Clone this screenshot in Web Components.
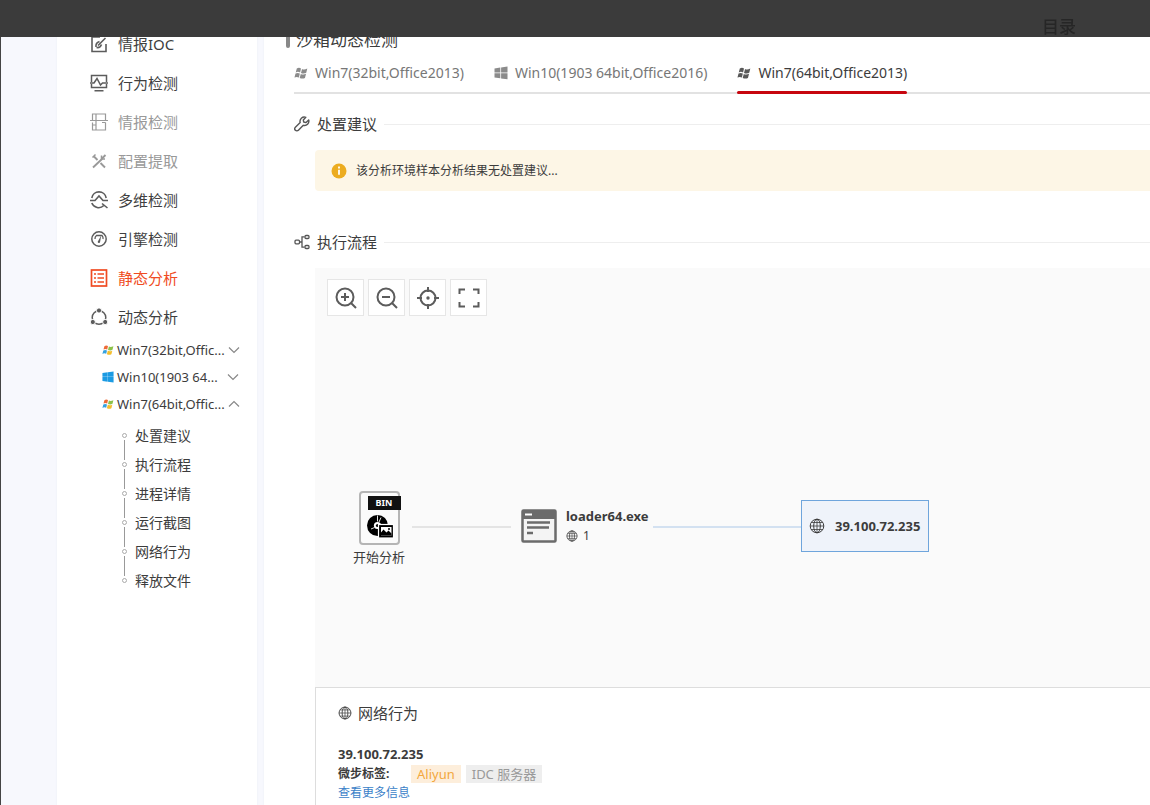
<!DOCTYPE html>
<html lang="zh-CN">
<head>
<meta charset="utf-8">
<meta name="viewport" content="width=device-width, initial-scale=1">
<title>沙箱动态检测</title>
<style>
html, body { margin: 0; height: 100%; }
body {
  color: #3c3c3c;
  font: 13px/20px "Noto Sans", "Noto Sans CJK SC", sans-serif;
}
</style>
</head>
<body>
<report-page>
  <top-bar slot="header">目录</top-bar>

  <side-nav slot="nav">
    <nav-item icon="edit">情报IOC</nav-item>
    <nav-item icon="monitor">行为检测</nav-item>
    <nav-item icon="scan" muted>情报检测</nav-item>
    <nav-item icon="tools" muted>配置提取</nav-item>
    <nav-item icon="multi">多维检测</nav-item>
    <nav-item icon="gauge">引擎检测</nav-item>
    <nav-item icon="list" active>静态分析</nav-item>
    <nav-item icon="ring">动态分析</nav-item>
    <env-item icon="win7c">Win7(32bit,Offic...</env-item>
    <env-item icon="win10c">Win10(1903 64...</env-item>
    <env-item icon="win7c" open>Win7(64bit,Offic...</env-item>
    <step-list>
      <step-item>处置建议</step-item>
      <step-item>执行流程</step-item>
      <step-item>进程详情</step-item>
      <step-item>运行截图</step-item>
      <step-item>网络行为</step-item>
      <step-item>释放文件</step-item>
    </step-list>
  </side-nav>

  <page-heading>沙箱动态检测</page-heading>
  <tab-bar>
    <env-tab icon="win7">Win7(32bit,Office2013)</env-tab>
    <env-tab icon="win10">Win10(1903 64bit,Office2016)</env-tab>
    <env-tab icon="win7" active>Win7(64bit,Office2013)</env-tab>
  </tab-bar>

  <report-section icon="wrench" heading="处置建议">
    <notice-banner>该分析环境样本分析结果无处置建议...</notice-banner>
  </report-section>

  <report-section icon="flow" heading="执行流程" grow>
    <flow-canvas></flow-canvas>
    <network-panel></network-panel>
  </report-section>
</report-page>

<script>
const ICONS = {
  edit: [18, `<g fill="none" stroke="currentColor" stroke-width="1.6"><path d="M10 2H2v14.500h14V9"/><path d="M6 12a5 5 0 0 1 3.500-5.500M6.500 12.500a4.500 4.500 0 0 0 5-3M8 10.500L15.500 3"/></g>`],
  monitor: [18, `<g fill="none" stroke="currentColor" stroke-width="1.500"><path d="M1.500 8V1.500h15V8M1.500 10v3.500h15V10M0 9h4l3-4.500L10.500 11l2-2H18M4.500 16.700h9"/></g>`],
  scan: [18, `<g fill="none" stroke="currentColor" stroke-width="1.200"><path d="M2.500 7V1h13v6M2.500 9.500V17h13V9.500M0 7.500h18M6 1v16M2.500 12H6M12 9.500h3.500"/></g>`],
  tools: [18, `<g fill="none" stroke="currentColor" stroke-width="1.900"><path d="M4 4.500L7.500 8M10.500 11L15 15.500M15.500 3L11.500 7M12 7L3 15.500"/><path d="M2.500 5.500l3-3M11.500 3.500v3.500H15" stroke-width="1.500"/></g>`],
  multi: [18, `<g fill="none" stroke="currentColor" stroke-width="1.600"><path d="M1.800 7a7.300 7.300 0 0 1 14.400 0M1.800 12a7.300 7.300 0 0 0 12 2.500"/><path d="M0 9.500h5L9 5l4 4.500h5M12 12.500l5.500 4.500"/></g>`],
  gauge: [18, `<circle cx="9" cy="9" r="7.200" fill="none" stroke="currentColor" stroke-width="1.500"/><path d="M5 9a4 4 0 0 1 1.500-3.500H12A4 4 0 0 1 13 9" fill="none" stroke="currentColor" stroke-width="1.300"/><path d="M11.200 5.500L10 12.500a1.300 1.300 0 0 1-2.300-.8z" fill="currentColor"/>`],
  list: [18, `<rect x="1.500" y="1" width="15" height="16" fill="none" stroke="currentColor" stroke-width="1.700"/><path d="M4 5h2M4 9h2M4 13h2M7.500 5H14M7.500 9H14M7.500 13H14" stroke="currentColor" stroke-width="1.700"/>`],
  ring: [18, `<circle cx="9" cy="9.500" r="6.800" fill="none" stroke="currentColor" stroke-width="1.500"/><g fill="currentColor" stroke="#fff" stroke-width="1"><circle cx="9" cy="2.500" r="2.600"/><circle cx="2.800" cy="14" r="2.600"/><circle cx="15.200" cy="14" r="2.600"/></g>`],
  win7: [12, `<path fill="currentColor" d="M2.400 2.200Q4.200 1 6 2.100L5.200 5.500Q3.200 4.500 1.500 5.600zM6.900 2.500Q8.600 3.500 11.400 2.200L10.500 5.800Q8.300 6.900 6 5.900zM1.300 6.500Q3 5.400 5 6.400L4.200 9.800Q2.300 8.800.400 9.900zM5.800 6.800Q7.900 7.800 10.300 6.700L9.400 10.200Q7.300 11.300 4.900 10.200z"/>`],
  win10: [14, `<path fill="currentColor" d="M.500 2.400L6.300 1.600V6.500H.500zM7.100 1.500L13.500.600V6.500H7.100zM.500 7.300H6.300V12.300L.500 11.500zM7.100 7.300H13.500V13.300L7.100 12.400z"/>`],
  win7c: [12, `<path fill="#ee6a37" d="M2.400 2.200Q4.200 1 6 2.100L5.200 5.500Q3.200 4.500 1.500 5.600z"/><path fill="#8cc24a" d="M6.900 2.500Q8.600 3.500 11.400 2.200L10.500 5.800Q8.300 6.900 6 5.900z"/><path fill="#35a2e0" d="M1.300 6.500Q3 5.400 5 6.400L4.200 9.800Q2.300 8.800.400 9.900z"/><path fill="#f5be2c" d="M5.800 6.800Q7.900 7.800 10.300 6.700L9.400 10.200Q7.300 11.300 4.900 10.200z"/>`],
  win10c: [14, `<path fill="#1c9be3" d="M.500 2.200L6.700 1.400V6.700H.500zM7 1.400L13.500.500V6.700H7zM.500 7H6.700V12.500L.500 11.700zM7 7H13.500V13.500L7 12.600z"/>`],
  down: [12, `<path d="M1 3.500l5 5 5-5" fill="none" stroke="currentColor" stroke-width="1.200"/>`],
  up: [12, `<path d="M1 8.500l5-5 5 5" fill="none" stroke="currentColor" stroke-width="1.200"/>`],
  wrench: [16, `<path d="M11.800 1.300A4.300 4.300 0 0 0 6.200 6.600L1.400 11.300a1.900 1.900 0 0 0 3 3l4.900-5A4.300 4.300 0 0 0 14.700 4L12 6.600 9.700 6 9.300 3.900z" fill="none" stroke="currentColor" stroke-width="1.400" stroke-linejoin="round"/>`],
  flow: [16, `<g fill="none" stroke="currentColor" stroke-width="1.300"><rect x="1" y="6.200" width="4.500" height="3.600" rx="1"/><path d="M5.500 8H8M10.500 2.800H8v10.400h2.500"/><rect x="11" y="1.500" width="4" height="3" rx="1"/><rect x="11" y="11.500" width="4" height="3" rx="1"/></g>`],
  info: [16, `<circle cx="8" cy="8" r="7.500" fill="#ecac20"/><path d="M8 3.500v2M8 6.800v5" stroke="#fff" stroke-width="1.800"/>`],
  zoomin: [24, `<g fill="none" stroke="currentColor" stroke-width="2"><circle cx="11" cy="11" r="8.500"/><path d="M17 17l5 5M7 11h8M11 7v8"/></g>`],
  zoomout: [24, `<g fill="none" stroke="currentColor" stroke-width="2"><circle cx="11" cy="11" r="8.500"/><path d="M17 17l5 5M7 11h8"/></g>`],
  target: [24, `<g fill="none" stroke="currentColor" stroke-width="2"><circle cx="12" cy="12" r="7.500"/><path d="M12 1v5M12 18v5M1 12h5M18 12h5"/></g><circle cx="12" cy="12" r="1.700" fill="currentColor"/>`],
  full: [24, `<path d="M2.500 8V3.500H8M16 3.500h5.500V8M21.500 16v4.500H16M8 20.500H2.500V16" fill="none" stroke="currentColor" stroke-width="2"/>`],
  globe: [16, `<g fill="none" stroke="currentColor"><circle cx="8" cy="8" r="6.800"/><ellipse cx="8" cy="8" rx="3.300" ry="6.800"/><path d="M8 1v14M1 8h14M2.300 4.500h11.400M2.300 11.500h11.400" stroke-width=".8"/></g>`],
  app: [36, `<rect x="1.500" y="2.500" width="33" height="31" rx="1" fill="#f4f4f4" stroke="#6b6b6b" stroke-width="2.500"/><path d="M1 2h34v9H1z" fill="#6b6b6b"/><path d="M4 6.500h7" stroke="#fff" stroke-width="2"/><path d="M6 14.500h23M6 19.500h22M6 25h6" stroke="#6b6b6b" stroke-width="2.400"/>`],
  disc: [30, `<circle cx="12.500" cy="13.500" r="10.500" fill="#000"/><circle cx="12.500" cy="13.500" r="3.600" fill="#fff"/><circle cx="12.500" cy="13.500" r="1.600" fill="#000"/><path d="M12.500 9.500V3.500M14 10l2-4.500M6 17l3.500-1.500" stroke="#fff" stroke-width=".9"/><rect x="13.500" y="12.500" width="15" height="13.500" fill="#000" stroke="#fff" stroke-width="1.200"/><rect x="16" y="15" width="10.500" height="8.500" fill="#fff"/><path d="M16 23.500v-3l2.500-3 3 3 2-2 3 3v2z" fill="#000"/><circle cx="24" cy="17" r="1" fill="#000"/>`]
};

/* Registers an element whose open shadow root is cloned from a template. */
function define(tag, render) {
  customElements.define(tag, class extends HTMLElement {
    constructor() {
      super();
      this.attachShadow({ mode: "open" });
    }
    connectedCallback() {
      const template = document.createElement("template");
      template.innerHTML = render(this);
      this.shadowRoot.replaceChildren(template.content.cloneNode(true));
    }
  });
}

define("ui-icon", el => {
  const [box, art] = ICONS[el.getAttribute("name")];
  const size = el.getAttribute("size") || box;
  return `<style>
    :host { display: block; flex: none; }
    svg { display: block; }
  </style><svg width="${size}" height="${size}" viewBox="0 0 ${box} ${box}" aria-hidden="true">${art}</svg>`;
});

define("report-page", () => `<style>
  :host {
    display: grid;
    grid-template-columns: 200px minmax(0, 1fr);
    column-gap: 7px;
    min-height: 100vh;
    box-sizing: border-box;
    padding-left: 56px;
    border-left: 1px solid #444;
    background: #f7f8fd;
  }
  aside, main { background: #fff; padding-top: 24px; box-shadow: 0 0 2px #eceef5; }
  main { padding-left: 22px; display: flex; flex-direction: column; }
</style>
<slot name="header"></slot>
<aside><slot name="nav"></slot></aside>
<main><slot></slot></main>`);

define("top-bar", () => `<style>
  :host {
    position: fixed; inset: 0 0 auto 0; z-index: 2;
    display: flex; justify-content: flex-end;
    padding: 17px 74px 0 0;
    background: #3b3b3b; color: #262626;
    font-size: 17px; line-height: 20px; font-weight: 500;
  }
</style><slot></slot>`);

define("side-nav", () => `<style>
  :host { display: block; }
  nav { display: flex; flex-direction: column; }
</style><nav><slot></slot></nav>`);

define("nav-item", el => `<style>
  :host { display: block; color: #3f3f3f; --icon: #5c5c5c; }
  :host([muted]) { color: #999; --icon: #999; }
  :host([active]) { color: #f04b22; --icon: #f04b22; }
  a {
    display: flex; align-items: center; gap: 10px;
    height: 39px; padding-left: 33px;
    color: inherit; text-decoration: none;
    font-size: 15px; line-height: 24px;
  }
  ui-icon { color: var(--icon); }
</style><a href="#"><ui-icon name="${el.getAttribute("icon")}"></ui-icon><span><slot></slot></span></a>`);

define("env-item", el => `<style>
  :host { display: block; }
  a {
    display: flex; align-items: center; gap: 3px;
    height: 27px; padding: 0 18px 0 45px;
    color: inherit; text-decoration: none;
  }
  span { flex: 1; white-space: nowrap; }
  .chevron { color: #888; }
</style><a href="#"><ui-icon name="${el.getAttribute("icon")}" size="12"></ui-icon><span><slot></slot></span><ui-icon class="chevron" name="${el.hasAttribute("open") ? "up" : "down"}"></ui-icon></a>`);

define("step-list", () => `<style>
  :host { display: block; padding: 4px 0 0 65px; }
</style><slot></slot>`);

define("step-item", () => `<style>
  :host { display: flex; gap: 8px; height: 29px; }
  i { display: flex; flex-direction: column; align-items: center; gap: 2px; width: 5px; }
  i::before { content: ""; flex: none; width: 3px; height: 3px; margin-top: 12px; border: 1px solid #aaa; border-radius: 50%; }
  i::after { content: ""; flex: none; width: 1px; height: 20px; background: #999; }
  :host(:last-child) i::after { display: none; }
  a { color: inherit; text-decoration: none; font-size: 14px; line-height: 29px; }
</style><i></i><a href="#"><slot></slot></a>`);

define("page-heading", () => `<style>
  :host { display: block; }
  h1 { display: flex; align-items: center; gap: 6px; margin: 0; padding-top: 4px; font-size: 17px; line-height: 24px; font-weight: 400; }
  h1::before { content: ""; width: 4px; height: 16px; border-radius: 2px; background: #888; }
</style><h1><slot></slot></h1>`);

define("tab-bar", () => `<style>
  :host {
    display: flex; gap: 30px; height: 40px; margin-left: 8px;
    border-bottom: 2px solid #e2e2e2;
  }
</style><slot></slot>`);

define("env-tab", el => `<style>
  :host { display: block; color: #777; }
  :host([active]) { color: #3c3c3c; }
  button {
    position: relative;
    display: flex; align-items: center; gap: 7px;
    height: 42px; padding: 0; border: 0;
    background: none; color: inherit; font: inherit; font-size: 14px; white-space: nowrap;
  }
  ui-icon { opacity: .85; }
  :host([active]) button::after {
    content: ""; position: absolute; left: 0; right: 0; bottom: 0;
    height: 3px; border-radius: 2px; background: #c7060f;
  }
</style><button type="button"><ui-icon name="${el.getAttribute("icon")}" size="14"></ui-icon><slot></slot></button>`);

define("report-section", el => `<style>
  :host { display: block; margin-left: 8px; }
  :host([grow]) { flex: 1; display: flex; flex-direction: column; }
  header { display: flex; align-items: center; gap: 7px; padding-top: 18px; }
  ui-icon { color: #555; }
  h2 { margin: 0; font-size: 15px; line-height: 24px; font-weight: 400; }
  hr { flex: 1; height: 1px; margin: 0; border: 0; background: #eee; }
  .body { padding: 14px 0 21px 21px; }
  :host([grow]) .body { flex: 1; display: flex; flex-direction: column; padding-bottom: 0; }
</style>
<header><ui-icon name="${el.getAttribute("icon")}"></ui-icon><h2>${el.getAttribute("heading")}</h2><hr></header>
<div class="body"><slot></slot></div>`);

define("notice-banner", () => `<style>
  :host {
    display: flex; align-items: center; gap: 9px;
    height: 41px; padding-left: 16px;
    border-radius: 4px 0 0 4px; background: #fdf6e6;
    font-size: 12px;
  }
</style><ui-icon name="info"></ui-icon><span><slot></slot></span>`);

define("tool-button", el => `<style>
  :host { display: block; }
  button {
    display: grid; place-items: center; width: 37px; height: 37px; padding: 0;
    border: 1px solid #e6e6e6; background: #fff; color: #5c5c5c;
  }
</style><button type="button" aria-label="${el.getAttribute("label")}"><ui-icon name="${el.getAttribute("icon")}"></ui-icon></button>`);

define("file-node", () => `<style>
  :host { display: flex; flex-direction: column; align-items: center; gap: 2px; width: 60px; }
  .file {
    box-sizing: border-box; width: 41px; height: 54px; padding-top: 3px;
    border: 2px solid #b5b5b5; border-radius: 4px; background: #fbfbfb;
  }
  b {
    display: block; width: 33px; margin-left: 7px; background: #111; color: #fff;
    font-size: 9px; line-height: 14px; text-align: center;
  }
  ui-icon { margin: 2px 0 0 4px; }
</style><div class="file"><b>BIN</b><ui-icon name="disc"></ui-icon></div><span><slot></slot></span>`);

define("process-node", el => `<style>
  :host { display: flex; align-items: center; gap: 9px; }
  b, small { display: flex; align-items: center; gap: 5px; line-height: 20px; }
  small { font-size: 12px; }
</style><ui-icon name="app"></ui-icon><div><b><slot></slot></b><small><ui-icon name="globe" size="12"></ui-icon>${el.getAttribute("count")}</small></div>`);

define("host-node", () => `<style>
  :host {
    display: flex; align-items: center; gap: 10px; box-sizing: border-box;
    width: 128px; height: 52px; padding-left: 7px;
    border: 1px solid #6fa5dc; background: #eff3fa; font-weight: 700;
  }
</style><ui-icon name="globe"></ui-icon><slot></slot>`);

define("flow-canvas", () => `<style>
  :host { display: block; flex: none; position: relative; height: 419px; background: #fafafa; overflow: hidden; }
  .tools { display: flex; gap: 4px; padding: 11px 12px; }
  .edge, .node { position: absolute; }
  .edge { height: 2px; top: 258px; background: #e4e4e4; }
  .edge.hit { background: #d3e1f1; }
</style>
<div class="tools">
  <tool-button icon="zoomin" label="放大"></tool-button>
  <tool-button icon="zoomout" label="缩小"></tool-button>
  <tool-button icon="target" label="定位"></tool-button>
  <tool-button icon="full" label="全屏"></tool-button>
</div>
<span class="edge" style="left:97px;width:99px"></span>
<span class="edge hit" style="left:338px;width:148px"></span>
<file-node class="node" style="left:34px;top:223px">开始分析</file-node>
<process-node class="node" style="left:206px;top:238px" count="1">loader64.exe</process-node>
<host-node class="node" style="left:486px;top:232px">39.100.72.235</host-node>`);

define("info-tag", () => `<style>
  :host { display: block; padding: 0 6px; background: #eee; color: #999; font-size: 13px; line-height: 18px; }
  :host([warm]) { background: #fdeedb; color: #f3a73d; }
</style><slot></slot>`);

define("network-panel", () => `<style>
  :host {
    display: block; flex: 1; padding: 13px 0 0 22px;
    border: 1px solid #ddd; border-width: 1px 0 0 1px; background: #fff;
  }
  h3 { display: flex; align-items: center; gap: 6px; margin: 0 0 19px; font-size: 15px; line-height: 24px; font-weight: 400; }
  .ip { display: block; line-height: 20px; }
  .tags { display: flex; align-items: center; gap: 5px; font-size: 12px; line-height: 20px; }
  .tags b { width: 68px; white-space: nowrap; }
  a { display: block; width: max-content; color: #3b7fc8; font-size: 12px; line-height: 18px; text-decoration: none; }
</style>
<h3><ui-icon name="globe" size="14"></ui-icon>网络行为</h3>
<b class="ip">39.100.72.235</b>
<div class="tags"><b>微步标签:</b><info-tag warm>Aliyun</info-tag><info-tag>IDC 服务器</info-tag></div>
<a href="#">查看更多信息</a>`);
</script>
</body>
</html>
